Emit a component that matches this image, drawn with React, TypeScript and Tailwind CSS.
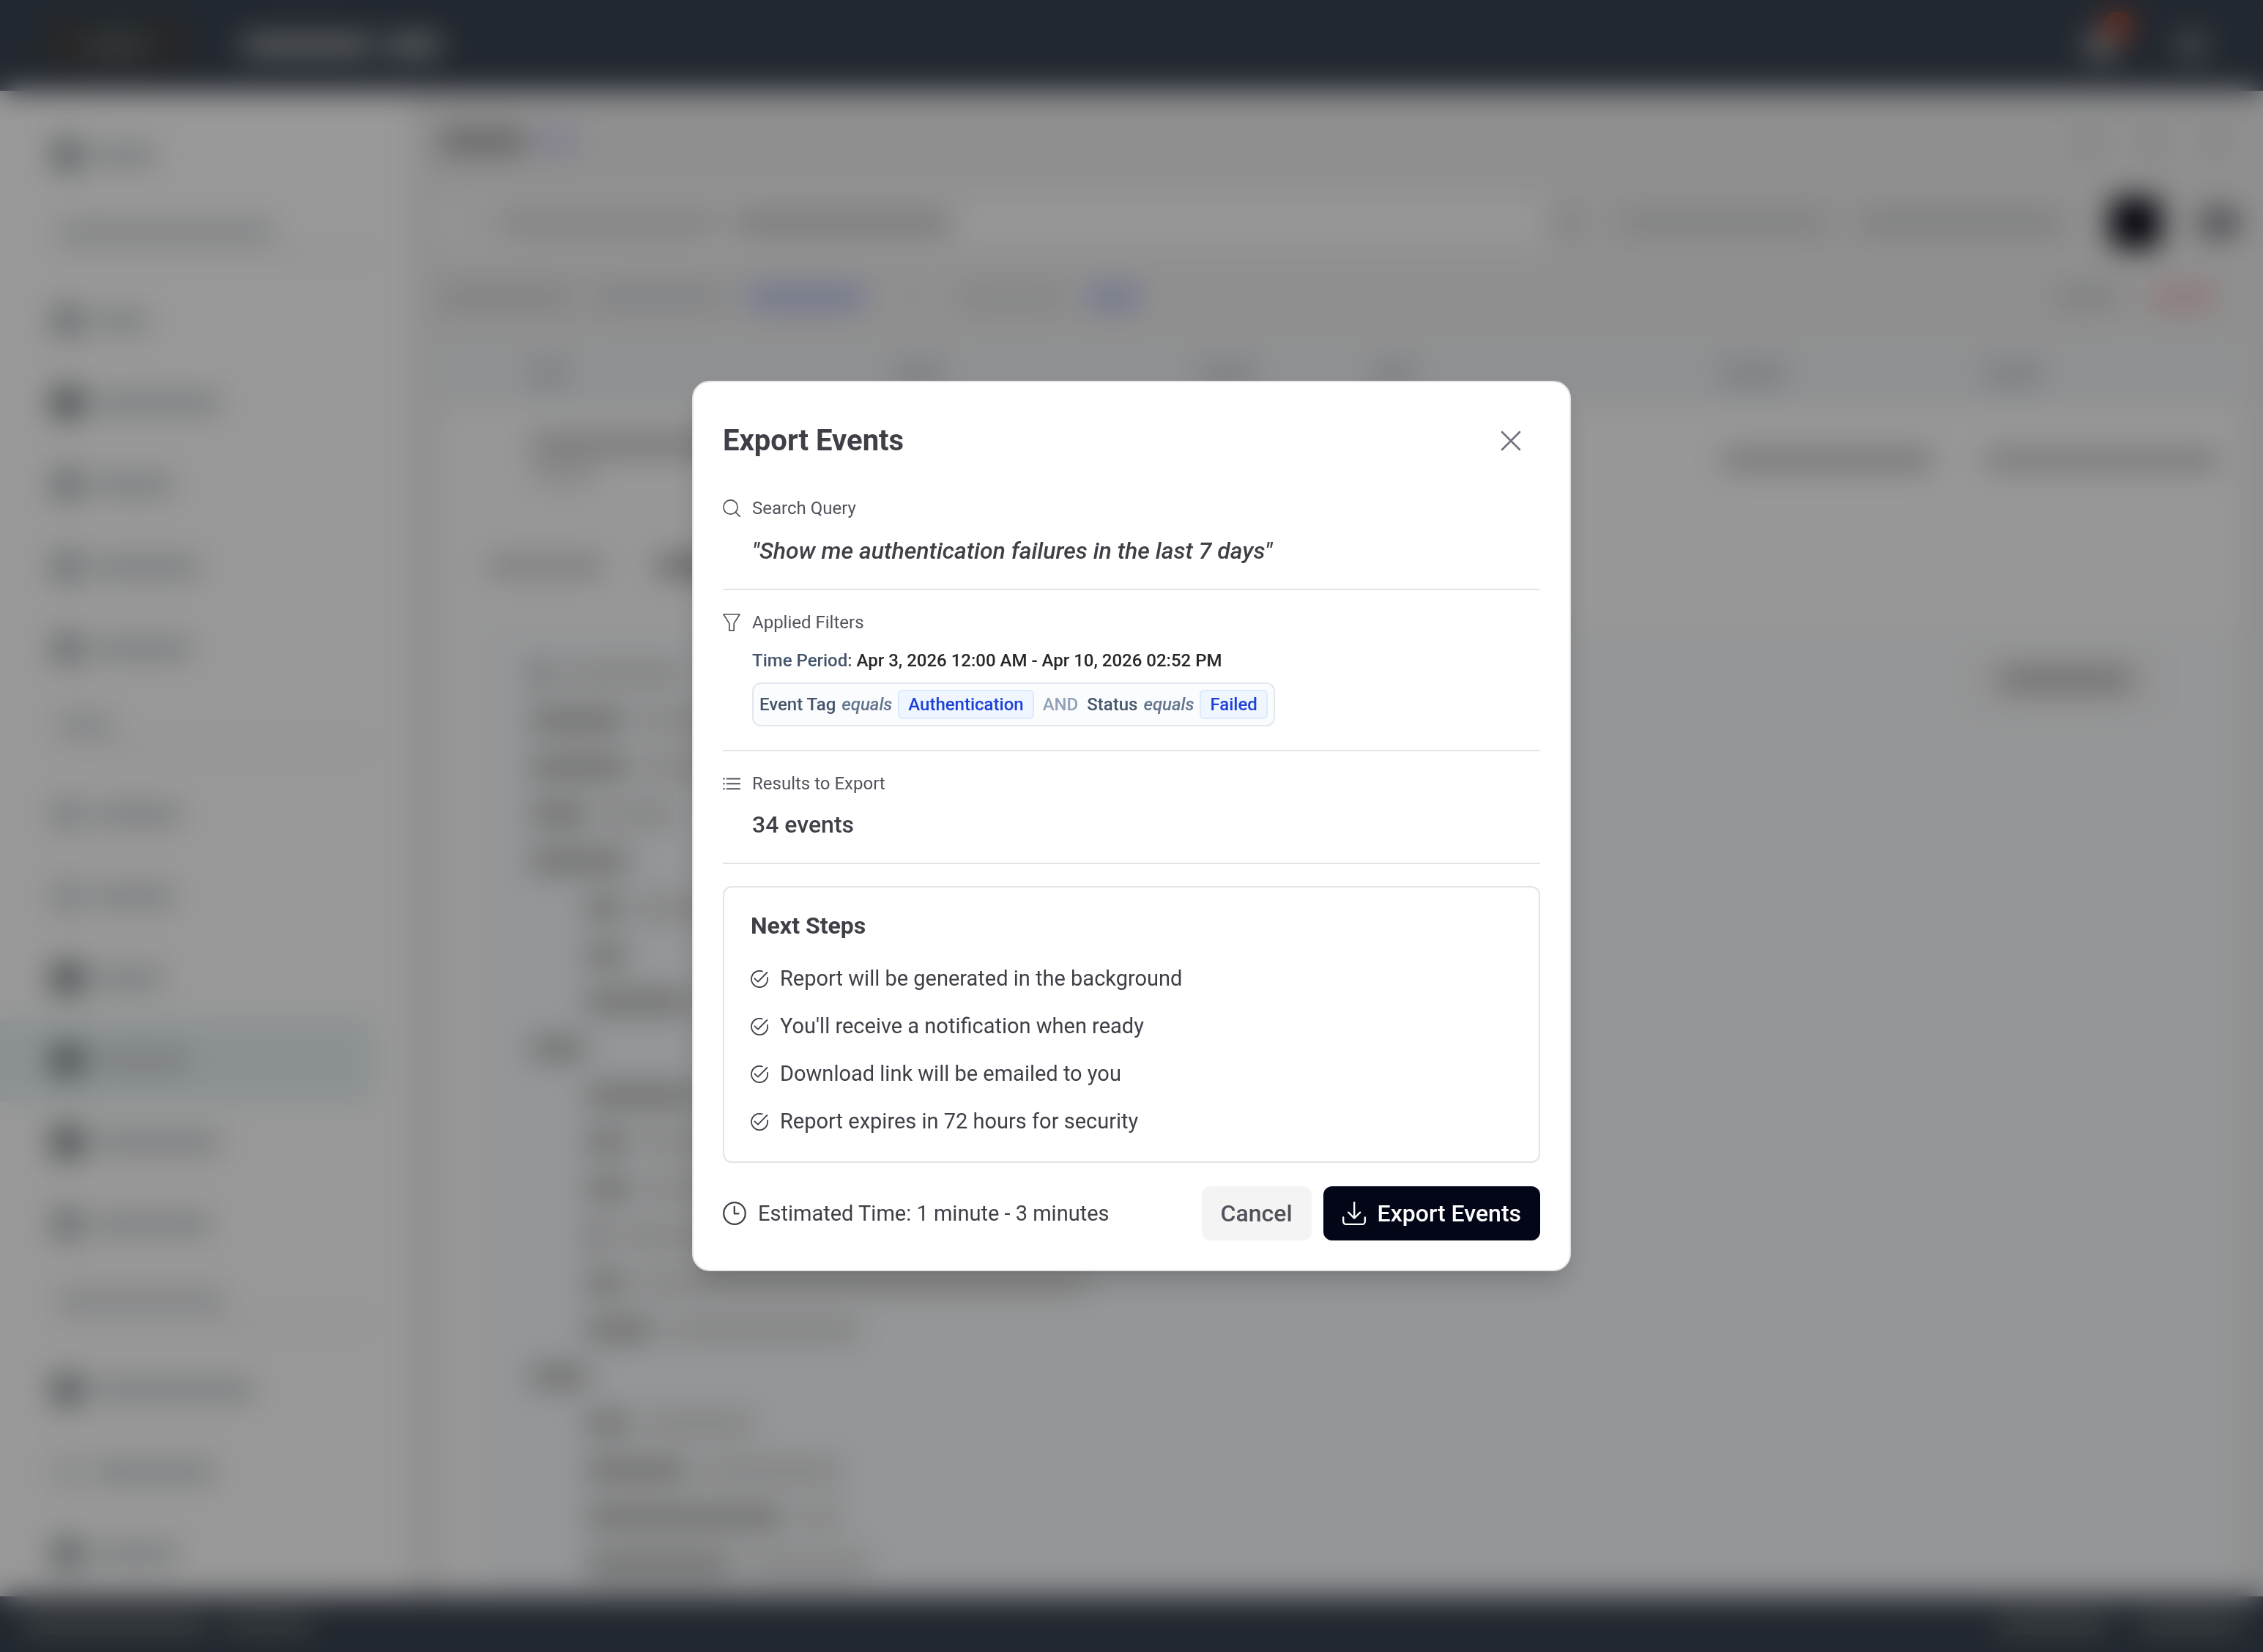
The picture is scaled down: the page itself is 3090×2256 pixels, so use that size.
import { ReactNode } from 'react'

type BarProps = { className: string }

function Bar({ className }: BarProps) {
    return <span className={`block h-7 shrink-0 rounded-lg ${className}`} />
}

const navGroups = [
    {
        heading: '',
        items: [{ icon: 'bg-[#a3a9ac]', label: 'w-[84px]' }]
    },
    {
        heading: 'w-[300px]',
        items: [
            { icon: 'bg-[#b4b9bc]', label: 'w-[74px]' },
            { icon: 'bg-[#7f8588]', label: 'w-[172px]' },
            { icon: 'bg-[#b4b9bc]', label: 'w-[108px]' },
            { icon: 'bg-[#bcc1c4]', label: 'w-[144px]' },
            { icon: 'bg-[#b4b9bc]', label: 'w-[132px]' }
        ]
    },
    {
        heading: 'w-[80px]',
        items: [
            { icon: 'bg-[#d0d4d7]', label: 'w-[118px]' },
            { icon: 'bg-[#d3d7da]', label: 'w-[108px]' },
            { icon: 'bg-[#7f8588]', label: 'w-[94px]' },
            { icon: 'bg-[#7a8586]', label: 'w-[128px]', active: true },
            { icon: 'bg-[#7f8588]', label: 'w-[172px]' },
            { icon: 'bg-[#b4b9bc]', label: 'w-[158px]' }
        ]
    },
    {
        heading: 'w-[232px]',
        items: [
            { icon: 'bg-[#94999c]', label: 'w-[218px]' },
            { icon: 'bg-[#e4e7e8]', label: 'w-[164px]' },
            { icon: 'bg-[#a3a9ac]', label: 'w-[114px]' }
        ]
    }
]

const jsonLines = [
    { indent: 'pl-[124px]', name: 'w-[30px]', value: 'w-[160px]' },
    { indent: 'pl-[124px]', name: 'w-[130px]', value: 'w-[200px]' },
    { indent: 'pl-[124px]', name: 'w-[136px]', value: 'w-[200px]' },
    { indent: 'pl-[124px]', name: 'w-[80px]', value: 'w-[100px]' },
    { indent: 'pl-[124px]', name: 'w-[134px]', value: 'w-0' },
    { indent: 'pl-[200px]', name: 'w-[50px]', value: 'w-[120px]' },
    { indent: 'pl-[200px]', name: 'w-[54px]', value: 'w-0' },
    { indent: 'pl-[200px]', name: 'w-[140px]', value: 'w-[120px]' },
    { indent: 'pl-[124px]', name: 'w-[76px]', value: 'w-0' },
    { indent: 'pl-[200px]', name: 'w-[150px]', value: 'w-[100px]' },
    { indent: 'pl-[200px]', name: 'w-[58px]', value: 'w-[120px]' },
    { indent: 'pl-[200px]', name: 'w-[62px]', value: 'w-[120px]' },
    { indent: 'pl-[200px]', name: 'w-[28px]', value: 'w-[140px]' },
    { indent: 'pl-[200px]', name: 'w-[56px]', value: 'w-[610px]' },
    { indent: 'pl-[200px]', name: 'w-[94px]', value: 'w-[260px]' },
    { indent: 'pl-[124px]', name: 'w-[80px]', value: 'w-0' },
    { indent: 'pl-[200px]', name: 'w-[60px]', value: 'w-[150px]' },
    { indent: 'pl-[200px]', name: 'w-[140px]', value: 'w-[190px]' },
    { indent: 'pl-[200px]', name: 'w-[270px]', value: 'w-[60px]' },
    { indent: 'pl-[200px]', name: 'w-[200px]', value: 'w-[170px]' }
]

const columns = ['w-[50px]', 'w-[68px]', 'w-[78px]', 'w-[60px]', 'w-[90px]', 'w-[80px]']

const nextSteps = [
    'Report will be generated in the background',
    "You'll receive a notification when ready",
    'Download link will be emailed to you',
    'Report expires in 72 hours for security'
]

function TopBar() {
    return (
        <header className="flex h-[124px] shrink-0 items-center justify-between bg-[#3a4350] pl-[64px] pr-[78px]">
            <div className="flex items-center gap-[76px]">
                <div className="flex h-[72px] w-[190px] items-center justify-between bg-[#3b4042] px-3">
                    <Bar className="w-6 bg-[#5e4840]" />
                    <Bar className="w-[84px] bg-[#62686b]" />
                    <Bar className="w-6 bg-[#544440]" />
                </div>
                <div className="flex gap-4">
                    <Bar className="w-[180px] bg-[#a2a5a7]" />
                    <Bar className="w-[76px] bg-[#a2a5a7]" />
                </div>
            </div>
            <div className="flex items-center gap-[84px]">
                <div className="relative h-11 w-10 rounded-full bg-[#9da2a4]">
                    <span className="absolute -top-6 left-6 h-10 w-10 rounded-full bg-[#c04c2c]" />
                </div>
                <span className="h-10 w-10 rounded-full bg-[#7c8385]" />
            </div>
        </header>
    )
}

function Sidebar() {
    return (
        <nav className="w-[560px] shrink-0 bg-white pt-8">
            {navGroups.map((group, index) => (
                <div key={index}>
                    {group.heading && (
                        <div className="ml-[76px] mr-[48px] flex h-[114px] flex-col justify-center gap-4">
                            <Bar className={`bg-[#d6d9dc] ${group.heading}`} />
                            <span className="h-1 bg-[#d4d4d4]" />
                        </div>
                    )}
                    {group.items.map((item, i) => (
                        <div
                            key={i}
                            className={`mr-[48px] flex h-28 items-center gap-4 rounded-r-3xl pl-[70px] ${'active' in item ? 'bg-[#e8f1f2]' : ''}`}
                        >
                            <span className={`h-11 w-11 rounded-lg ${item.icon}`} />
                            <Bar className={`bg-[#cbcfd2] ${item.label}`} />
                        </div>
                    ))}
                </div>
            ))}
        </nav>
    )
}

function EventsPage() {
    return (
        <main className="flex min-w-0 flex-1 flex-col bg-[#efefef] pl-[40px] pr-[32px]">
            <div className="flex h-[138px] items-center justify-between">
                <div className="flex items-center gap-3">
                    <span className="h-8 w-[118px] rounded-lg bg-[#a6a6a6]" />
                    <Bar className="w-[60px] bg-[#d5cdf0]" />
                </div>
                <div className="flex gap-[56px] pr-4">
                    <Bar className="w-8 bg-[#d8d8d8]" />
                    <Bar className="w-8 bg-[#dcdcdc]" />
                    <Bar className="w-8 bg-[#dcdcdc]" />
                </div>
            </div>

            <div className="flex h-[84px] items-center">
                <div className="flex h-[72px] flex-1 items-center gap-5 rounded-xl bg-[#fbfbfb] px-[36px]">
                    <Bar className="w-6 bg-[#dddddd]" />
                    <Bar className="w-[300px] bg-[#cfcfcf]" />
                    <Bar className="w-[300px] bg-[#c4c4c4]" />
                </div>
                <Bar className="ml-3 w-8 bg-[#cfcfcf]" />
                <Bar className="ml-[52px] w-[290px] bg-[#d2d4d6]" />
                <Bar className="ml-[40px] w-[280px] bg-[#ced0d2]" />
                <span className="ml-[64px] h-[68px] w-[68px] rounded-xl bg-[#02030f]" />
                <span className="ml-[52px] h-10 w-[56px] rounded-xl bg-[#82838a]" />
            </div>

            <div className="flex h-[120px] items-center justify-between">
                <div className="flex items-center">
                    <Bar className="w-[180px] bg-[#d4d4d4]" />
                    <Bar className="ml-7 w-[180px] bg-[#d4d7db]" />
                    <Bar className="ml-8 w-[160px] bg-[#b4bdeb]" />
                    <Bar className="ml-[60px] w-4 bg-[#e0e2e6]" />
                    <Bar className="ml-[56px] w-[140px] bg-[#d7d9dc]" />
                    <Bar className="ml-8 w-[72px] bg-[#b4bdeb]" />
                </div>
                <div className="flex gap-[44px] pr-8">
                    <Bar className="w-[88px] bg-[#cfd1d5]" />
                    <Bar className="w-[90px] bg-[#ecc2c2]" />
                </div>
            </div>

            <div className="flex min-h-0 flex-1 flex-col rounded-t-xl bg-[#fdfdfd]">
                <div className="grid h-[90px] shrink-0 grid-cols-[493fr_414fr_236fr_473fr_359fr_346fr] items-center bg-[#eff1f3] pl-[124px]">
                    {columns.map((width, index) => (
                        <Bar key={index} className={`bg-[#c9cdd3] ${width}`} />
                    ))}
                </div>
                <div className="grid h-36 shrink-0 grid-cols-[1616fr_359fr_346fr] items-center pl-[124px]">
                    <div className="flex flex-col gap-3">
                        <Bar className="w-[300px] bg-[#c4c4c4]" />
                        <Bar className="w-[90px] bg-[#dcdee1]" />
                    </div>
                    <Bar className="w-[290px] bg-[#c4c4c4]" />
                    <Bar className="w-[320px] bg-[#c8c8c8]" />
                </div>
                <div className="mb-[10px] flex h-[146px] shrink-0 items-center gap-[72px] pl-[64px]">
                    <Bar className="w-[160px] bg-[#cfcfcf]" />
                    <Bar className="w-[160px] bg-[#a4a4a4]" />
                </div>
                <div className="ml-[56px] flex min-h-0 flex-1 justify-between rounded-xl bg-[#f8fafc] pt-8">
                    <ul className="flex-1">
                        {jsonLines.map((line, index) => (
                            <li key={index} className={`-ml-[56px] flex h-16 items-center gap-5 ${line.indent}`}>
                                <Bar className={`bg-[#b2b2b2] ${line.name}`} />
                                <Bar className={`bg-[#d6d6d6] ${line.value}`} />
                            </li>
                        ))}
                    </ul>
                    <div className="mr-[108px] flex h-20 w-[260px] items-center justify-center rounded-xl bg-[#f4f4f4]">
                        <Bar className="w-[180px] bg-[#b4b4b4]" />
                    </div>
                </div>
            </div>
        </main>
    )
}

function FooterBar() {
    return (
        <footer className="flex h-[76px] shrink-0 items-center justify-between bg-[#3a4350] px-8">
            <div className="flex gap-6">
                <Bar className="w-[250px] bg-[#62686a]" />
                <Bar className="w-[120px] bg-[#5e6466]" />
            </div>
            <div className="flex gap-10">
                <Bar className="w-[150px] bg-[#62686a]" />
                <Bar className="w-[140px] bg-[#62686a]" />
            </div>
        </footer>
    )
}

type IconProps = { size?: string; box?: number; stroke?: number; children: ReactNode }

function Icon({ size = 'h-6 w-6', box = 24, stroke = 1.7, children }: IconProps) {
    return (
        <svg
            className={`shrink-0 ${size}`}
            viewBox={`0 0 ${box} ${box}`}
            fill="none"
            stroke="currentColor"
            strokeWidth={stroke}
            strokeLinecap="round"
            strokeLinejoin="round"
            aria-hidden="true"
        >
            {children}
        </svg>
    )
}

type SectionProps = { icon: ReactNode; label: string; className: string; children: ReactNode }

function Section({ icon, label, className, children }: SectionProps) {
    return (
        <section className={`border-b-2 border-zinc-200 ${className}`}>
            <h3 className="flex items-center gap-4 text-[24px] leading-10 text-zinc-600">
                {icon}
                {label}
            </h3>
            <div className="pl-10 pt-4">{children}</div>
        </section>
    )
}

function FilterValue({ children }: { children: ReactNode }) {
    return (
        <span className="flex h-10 items-center rounded-md border-2 border-blue-100 bg-blue-50 px-3 text-[#1d40d8]">
            {children}
        </span>
    )
}

function ExportDialog() {
    return (
        <div
            role="dialog"
            aria-modal="true"
            aria-labelledby="export-title"
            className="w-full max-w-[1200px] rounded-3xl border-2 border-zinc-200 bg-white p-10 shadow-[0_20px_40px_-6px_rgba(0,0,0,0.18),0_8px_12px_-8px_rgba(0,0,0,0.1)]"
        >
            <div className="mb-8 flex items-center justify-between">
                <h2 id="export-title" className="text-[40px] font-bold leading-[56px] text-zinc-700">
                    Export Events
                </h2>
                <button type="button" aria-label="Close" className="flex h-20 w-20 items-center justify-center text-zinc-500">
                    <Icon size="h-7 w-7" box={28} stroke={2.6}>
                        <path d="M2 2l24 24M26 2L2 26" />
                    </Icon>
                </button>
            </div>

            <Section
                label="Search Query"
                className="pb-[30px]"
                icon={
                    <Icon>
                        <circle cx="10.5" cy="10.5" r="9.6" />
                        <path d="M17.3 17.3l6 6" />
                    </Icon>
                }
            >
                <p className="text-[32px] font-medium italic leading-[44px] text-zinc-700">
                    "Show me authentication failures in the last 7 days"
                </p>
            </Section>

            <Section
                label="Applied Filters"
                className="pb-8 pt-6"
                icon={
                    <Icon>
                        <path d="M1 1h22l-7.8 12.4V23.2H8.8v-9.8z" />
                    </Icon>
                }
            >
                <p className="text-[24px] font-medium leading-8 text-zinc-800">
                    <span className="text-slate-600">Time Period:</span> Apr 3, 2026 12:00 AM - Apr 10, 2026 02:52 PM
                </p>
                <div className="mt-[14px] flex h-[60px] w-fit items-center gap-2 rounded-xl border-2 border-slate-200 bg-slate-50/60 px-2 text-[24px] font-medium leading-8 text-slate-600">
                    <span>Event Tag</span>
                    <span className="italic text-slate-500">equals</span>
                    <FilterValue>Authentication</FilterValue>
                    <span className="px-1 text-slate-400">AND</span>
                    <span>Status</span>
                    <span className="italic text-slate-500">equals</span>
                    <FilterValue>Failed</FilterValue>
                </div>
            </Section>

            <Section
                label="Results to Export"
                className="pb-8 pt-6"
                icon={
                    <Icon stroke={2}>
                        <path d="M5.5 5.5h17.7M5.5 12.2h17.7M5.5 19.2h17.7" />
                        <path strokeWidth={2.6} d="M1.4 5.5h.01M1.4 12.2h.01M1.4 19.2h.01" />
                    </Icon>
                }
            >
                <p className="text-[32px] font-medium leading-10 text-zinc-700">34 events</p>
            </Section>

            <section className="mt-[30px] rounded-xl border-2 border-zinc-200 px-9 py-8 text-zinc-700">
                <h3 className="text-[32px] font-bold leading-10">Next Steps</h3>
                <ul className="mt-[30px] flex flex-col gap-5">
                    {nextSteps.map((step) => (
                        <li key={step} className="flex items-center gap-4 text-[29px] leading-[45px]">
                            <Icon stroke={1.8}>
                                <path d="M15.8 1.5A11.1 11.1 0 1 0 23 10" />
                                <path d="M5.4 11.3l4.6 4.3L22.4 3" />
                            </Icon>
                            {step}
                        </li>
                    ))}
                </ul>
            </section>

            <div className="mt-8 flex items-center justify-between">
                <p className="flex items-center gap-4 text-[29px] leading-[45px] text-zinc-700">
                    <Icon size="h-8 w-8" box={32} stroke={2.3}>
                        <circle cx="16" cy="16" r="14.8" />
                        <path d="M15.8 7v9.3h5.7" />
                    </Icon>
                    Estimated Time: 1 minute - 3 minutes
                </p>
                <div className="flex gap-4 text-[32px] font-medium leading-10">
                    <button type="button" className="flex h-[74px] items-center rounded-xl bg-zinc-100 px-[26px] text-zinc-600">
                        Cancel
                    </button>
                    <button type="button" className="flex h-[74px] items-center gap-4 rounded-xl bg-[#020617] px-[26px] text-white">
                        <Icon size="h-8 w-8" box={32} stroke={2.3}>
                            <path d="M16.2 1v21.6M8.2 14.6l8 8 8-8" />
                            <path d="M1.2 21.5V27a4 4 0 0 0 4 4h21.6a4 4 0 0 0 4-4v-5.5" />
                        </Icon>
                        Export Events
                    </button>
                </div>
            </div>
        </div>
    )
}

export default function App() {
    return (
        <div className="relative font-['Roboto',sans-serif]">
            <div className="flex h-screen flex-col overflow-hidden" aria-hidden="true">
                <TopBar />
                <div className="flex min-h-0 flex-1 overflow-hidden">
                    <Sidebar />
                    <EventsPage />
                </div>
                <FooterBar />
            </div>
            <div className="fixed inset-0 flex items-center justify-center bg-black/40 backdrop-blur-[20px]">
                <ExportDialog />
            </div>
        </div>
    )
}
